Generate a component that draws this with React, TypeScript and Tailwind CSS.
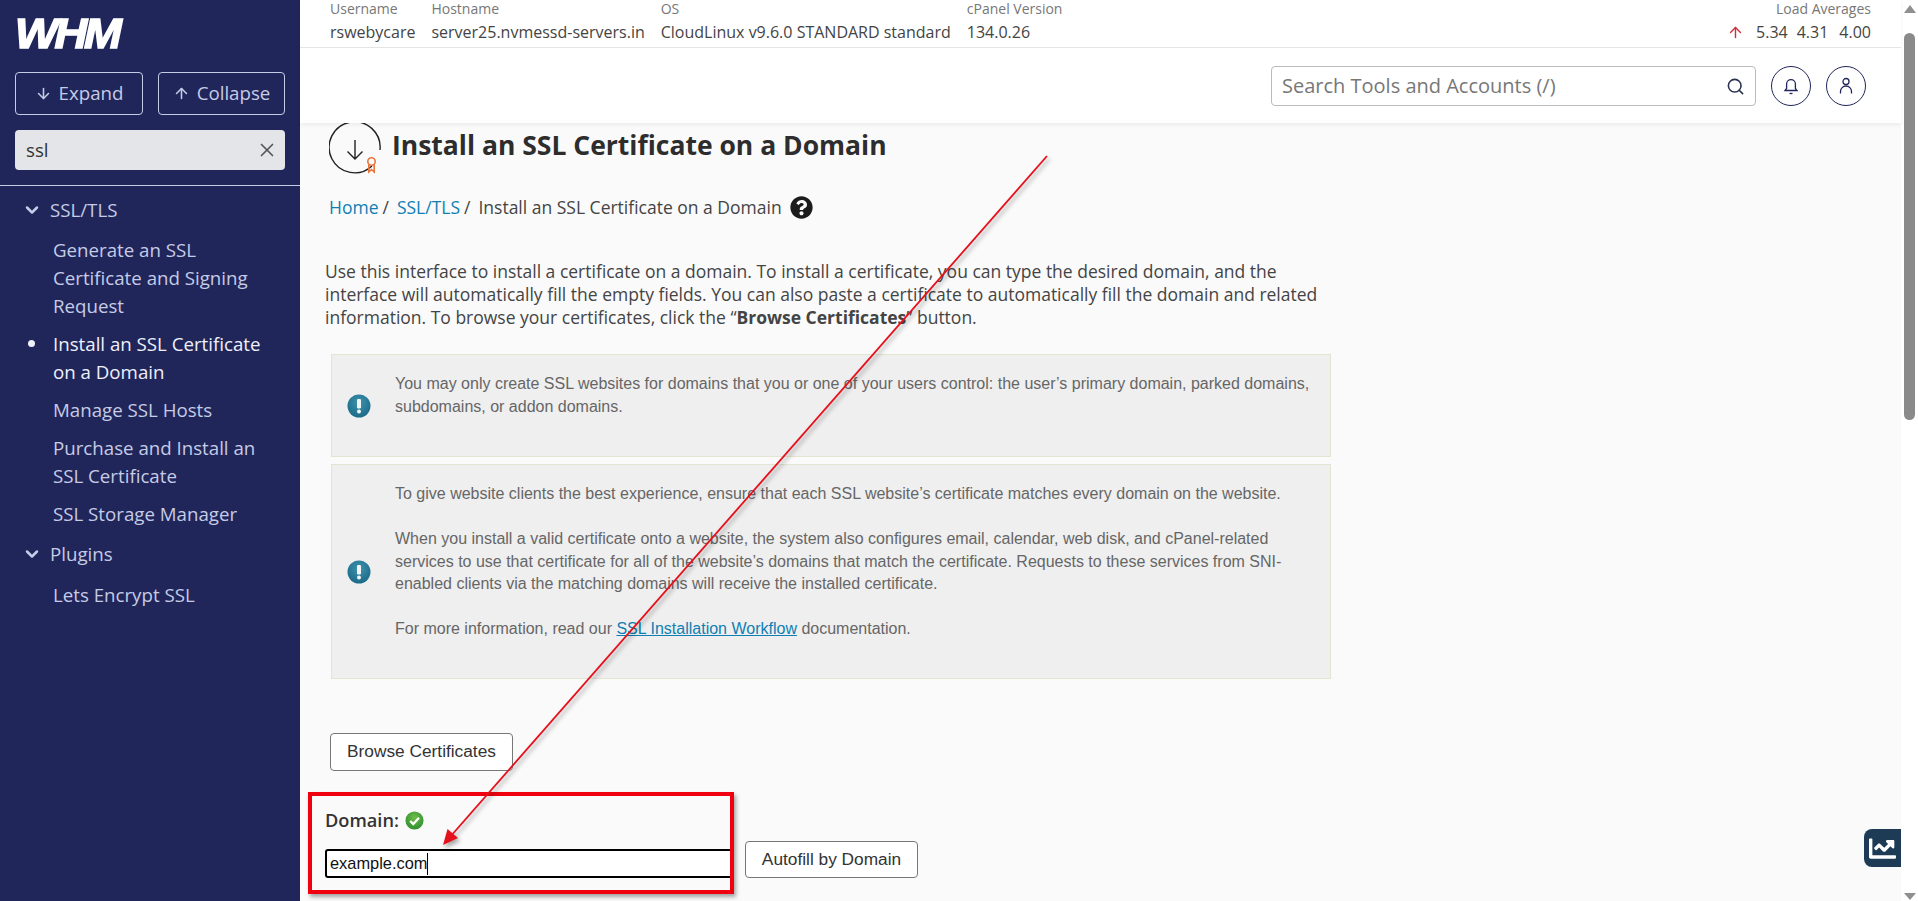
import { ArrowDown, ArrowUp, ChevronDown, Search, X } from "lucide-react";
import { FaChartLine, FaQuestionCircle } from "react-icons/fa";

const SERVER_INFO = [
  { label: "Username", value: "rswebycare" },
  { label: "Hostname", value: "server25.nvmessd-servers.in" },
  { label: "OS", value: "CloudLinux v9.6.0 STANDARD standard" },
  { label: "cPanel Version", value: "134.0.26" },
];

function NoticeIcon({ id }: { id: string }) {
  return (
    <svg viewBox="0 0 24 24" className="w-[24px] h-[24px] shrink-0">
      <defs>
        <radialGradient id={id} cx="50%" cy="35%" r="65%">
          <stop offset="0%" stopColor="#3f93ad" />
          <stop offset="100%" stopColor="#1b6a88" />
        </radialGradient>
      </defs>
      <circle cx="12" cy="12" r="11.5" fill={`url(#${id})`} />
      <rect x="10" y="5" width="4" height="9.5" rx="1.2" fill="#f2f5f6" />
      <circle cx="12" cy="17.6" r="2" fill="#f2f5f6" />
    </svg>
  );
}

function Notice({ children, height, id }: { children: React.ReactNode; height: string; id: string }) {
  return (
    <div className={`flex items-center border border-[#e4e4d0] bg-[#efefef] pl-[15px] ${height}`}>
      <NoticeIcon id={id} />
      <div className="ml-[24px] mb-[20px] w-[915px] font-['Liberation_Sans',sans-serif] text-[16px] leading-[22.5px] text-[#666]">
        {children}
      </div>
    </div>
  );
}

function SideLink({ children, active }: { children: React.ReactNode; active?: boolean }) {
  return (
    <li className={`relative pl-[53px] pr-[25px] text-[18.7px] leading-[28px] ${active ? "text-[#eef0fb]" : "text-[#c6cbe6]"}`}>
      {active && <span className="absolute left-[28px] top-[10px] h-[7px] w-[7px] rounded-full bg-[#eef0fb]" />}
      {children}
    </li>
  );
}

function SideGroup({ title }: { title: string }) {
  return (
    <div className="flex items-center pl-[22px] text-[18.7px] leading-[28px] text-[#c6cbe6]">
      <ChevronDown size={20} strokeWidth={3} className="mr-[8px]" />
      {title}
    </div>
  );
}

export default function App() {
  return (
    <div className="relative flex h-screen overflow-hidden bg-white font-['Open_Sans',sans-serif]">
      {/* Sidebar */}
      <aside className="w-[300px] shrink-0 bg-[#20265a]">
        <div className="h-[72px] pl-[15px] pt-[11px]">
          <span className="inline-block origin-left scale-x-[1.08] text-[42px] leading-[46px] font-black italic tracking-[-3px] text-white [-webkit-text-stroke:1.5px_white] font-['Liberation_Sans',sans-serif]">
            WHM
          </span>
        </div>
        <div className="flex justify-between px-[15px]">
          <button className="flex h-[43px] w-[128px] items-center justify-center gap-[7px] rounded-[4px] border border-[#c6cbe6] text-[18.7px] text-[#c6cbe6]">
            <ArrowDown size={17} strokeWidth={2.2} />
            Expand
          </button>
          <button className="flex h-[43px] w-[127px] items-center justify-center gap-[7px] rounded-[4px] border border-[#c6cbe6] text-[18.7px] text-[#c6cbe6]">
            <ArrowUp size={17} strokeWidth={2.2} />
            Collapse
          </button>
        </div>
        <div className="mx-[15px] mt-[15px] flex h-[40px] items-center justify-between rounded-[4px] bg-[#e3e5e8] pl-[11px] pr-[7px] text-[18.7px] text-[#333]">
          ssl
          <X size={22} strokeWidth={1.8} className="text-[#555]" />
        </div>
        <div className="mt-[15px] border-t border-[#c6cbe6] pt-[10px]">
          <SideGroup title="SSL/TLS" />
          <ul className="mt-[12px] flex flex-col gap-[10px]">
            <SideLink>Generate an SSL Certificate and Signing Request</SideLink>
            <SideLink active>Install an SSL Certificate on a Domain</SideLink>
            <SideLink>Manage SSL Hosts</SideLink>
            <SideLink>Purchase and Install an SSL Certificate</SideLink>
            <SideLink>SSL Storage Manager</SideLink>
          </ul>
          <div className="mt-[12px]">
            <SideGroup title="Plugins" />
          </div>
          <ul className="mt-[13px]">
            <SideLink>Lets Encrypt SSL</SideLink>
          </ul>
        </div>
      </aside>

      {/* Main column */}
      <div className="flex min-w-0 flex-1 flex-col">
        <header className="relative z-10 bg-white shadow-[0_2px_4px_rgba(0,0,0,0.06)]">
          <div className="flex h-[48px] justify-between border-b border-[#e4e4e4] pl-[30px] pr-[30px]">
            <div className="flex gap-[16px]">
              {SERVER_INFO.map((item) => (
                <div key={item.label}>
                  <div className="text-[14px] leading-[18px] text-[#777]">{item.label}</div>
                  <div className="mt-[4px] text-[16px] leading-[20px] text-[#444]">{item.value}</div>
                </div>
              ))}
            </div>
            <div className="flex flex-col items-end">
              <div className="text-[14px] leading-[18px] text-[#777]">Load Averages</div>
              <div className="mt-[4px] flex items-center text-[16px] leading-[20px] text-[#444]">
                <ArrowUp size={17} strokeWidth={2} className="mr-[12px] text-[#c8323f]" />
                <span>5.34</span>
                <span className="ml-[9px]">4.31</span>
                <span className="ml-[11px]">4.00</span>
              </div>
            </div>
          </div>
          <div className="flex h-[75px] items-start justify-end pr-[35px] pt-[18px]">
            <div className="flex h-[40px] w-[485px] items-center justify-between rounded-[4px] border border-[#bbb] pl-[10px] pr-[10px] text-[20px] text-[#777]">
              Search Tools and Accounts (/)
              <Search size={19} strokeWidth={2} className="text-[#2a3350]" />
            </div>
            <button className="ml-[15px] flex h-[40px] w-[40px] items-center justify-center rounded-full border border-[#20265a]">
              <svg viewBox="0 0 20 20" className="h-[20px] w-[20px] fill-none stroke-[#20265a]" strokeWidth="1.3">
                <path d="M4 14.5h12l-1.6-2V8a4.4 4.4 0 0 0-8.800 0v4.500z" />
                <path d="M8.500 17.500h3" />
              </svg>
            </button>
            <button className="ml-[15px] flex h-[40px] w-[40px] items-center justify-center rounded-full border border-[#20265a]">
              <svg viewBox="0 0 20 20" className="h-[20px] w-[20px] fill-none stroke-[#20265a]" strokeWidth="1.3">
                <circle cx="10" cy="5.500" r="3" />
                <path d="M4.500 17.500v-2a5.500 5.500 0 0 1 11 0v2" />
              </svg>
            </button>
          </div>
        </header>

        <main className="flex-1 overflow-hidden bg-[#fafafa] pl-[25px]">
          <div className="flex items-start pl-[4px]">
            <svg viewBox="0 0 52 52" className="h-[52px] w-[52px] shrink-0 fill-none">
              <path d="M43 43A25.500 25.500 0 1 1 51 27" stroke="#222" strokeWidth="1.400" />
              <path d="M26 17v19M18.500 28.500l7.500 7.500 7.500-7.500" stroke="#222" strokeWidth="1.400" />
              <circle cx="42.500" cy="38.500" r="3.700" stroke="#e8743b" strokeWidth="1.600" />
              <path d="M39.800 41.500v7.500l2.700-2.500 2.700 2.500v-7.500" stroke="#e8743b" strokeWidth="1.600" />
            </svg>
            <h1 className="ml-[11px] mt-[2px] text-[26.5px] font-bold leading-[40px] text-[#2d2d2d]">
              Install an SSL Certificate on a Domain
            </h1>
          </div>
          <nav className="mt-[20px] flex items-center pl-[4px] text-[17.5px] leading-[24px] text-[#444]">
            <span className="text-[#0f7fb3]">Home</span>
            <span className="ml-[4px]">/</span>
            <span className="ml-[8px] text-[#0f7fb3]">SSL/TLS</span>
            <span className="ml-[4px]">/</span>
            <span className="ml-[8px]">Install an SSL Certificate on a Domain</span>
            <FaQuestionCircle size={23} className="ml-[8px] text-[#1c1c1c]" />
          </nav>
          <p className="mt-[41px] w-[1000px] text-[17.5px] leading-[23px] text-[#444]">
            Use this interface to install a certificate on a domain. To install a certificate, you can type the desired domain, and the interface will automatically fill the empty fields. You can also paste a certificate to automatically fill the domain and related information. To browse your certificates, click the “<b>Browse Certificates</b>” button.
          </p>
          <div className="mt-[25px] ml-[6px] flex w-[1000px] flex-col gap-[7px]">
            <Notice height="h-[103px]" id="notice-a">
              You may only create SSL websites for domains that you or one of your users control: the user’s primary domain, parked domains, subdomains, or addon domains.
            </Notice>
            <Notice height="h-[215px]" id="notice-b">
              <p>To give website clients the best experience, ensure that each SSL website’s certificate matches every domain on the website.</p>
              <p className="mt-[23px]">When you install a valid certificate onto a website, the system also configures email, calendar, web disk, and cPanel-related services to use that certificate for all of the website’s domains that match the certificate. Requests to these services from SNI-enabled clients via the matching domains will receive the installed certificate.</p>
              <p className="mt-[22px]">For more information, read our <a className="text-[#0f7fb3] underline">SSL Installation Workflow</a> documentation.</p>
            </Notice>
          </div>
          <button className="mt-[54px] ml-[5px] h-[38px] w-[183px] rounded-[4px] border border-[#777] bg-white font-['Liberation_Sans',sans-serif] text-[17.3px] text-[#333]">
            Browse Certificates
          </button>
          <div className="mt-[37px] flex items-center text-[18.2px] leading-[24px]">
            <b className="font-semibold text-[#333]">Domain:</b>
            <svg viewBox="0 0 20 20" className="ml-[6px] h-[19px] w-[19px]">
              <defs>
                <radialGradient id="ok" cx="50%" cy="35%" r="65%">
                  <stop offset="0%" stopColor="#6fbd4a" />
                  <stop offset="100%" stopColor="#2f8f2f" />
                </radialGradient>
              </defs>
              <circle cx="10" cy="10" r="9.500" fill="url(#ok)" />
              <path d="M5.500 10.500l3.200 3.200 6-6.500" fill="none" stroke="#fff" strokeWidth="2.400" />
            </svg>
          </div>
          <div className="mt-[9px] flex items-end">
            <div className="flex h-[29px] w-[409px] items-center rounded-[3px] border-2 border-black bg-white pl-[3px] font-['Liberation_Sans',sans-serif] text-[16.4px] text-[#111]">
              example.com
              <span className="h-[22px] w-px bg-black" />
            </div>
            <button className="ml-[11px] h-[37px] w-[173px] rounded-[4px] border border-[#777] bg-white font-['Liberation_Sans',sans-serif] text-[17.3px] text-[#333]">
              Autofill by Domain
            </button>
          </div>
        </main>
      </div>

      {/* Scrollbar */}
      <div className="flex w-[17px] shrink-0 flex-col items-center bg-white">
        <span className="mt-[5px] h-0 w-0 border-x-[6px] border-b-[8px] border-x-transparent border-b-[#8f8f8f]" />
        <span className="mt-[20px] h-[387px] w-[11px] rounded-full bg-[#8a8a8a]" />
        <span className="mt-auto mb-[1px] h-0 w-0 border-x-[6px] border-t-[7px] border-x-transparent border-t-[#8f8f8f]" />
      </div>

      {/* Floating chart button */}
      <div className="absolute left-[1864px] top-[829px] flex h-[38px] w-[37px] items-center justify-center rounded-l-[8px] bg-[#1d3b55]">
        <FaChartLine size={27} className="text-white" />
      </div>

      {/* Annotation: red box and arrow drawn on the screenshot */}
      <div className="absolute left-[308px] top-[792px] h-[102px] w-[426px] border-[4px] border-[#f0000f] shadow-[2px_3px_4px_rgba(0,0,0,0.35)]" />
      <svg className="absolute inset-0 h-full w-full drop-shadow-[2px_3px_2px_rgba(0,0,0,0.35)]" viewBox="0 0 1918 901">
        <line x1="1047" y1="156" x2="450" y2="837" stroke="#e5101c" strokeWidth="1.800" />
        <polygon points="443,845 447.500,829 458,838" fill="#e5101c" />
      </svg>
    </div>
  );
}
